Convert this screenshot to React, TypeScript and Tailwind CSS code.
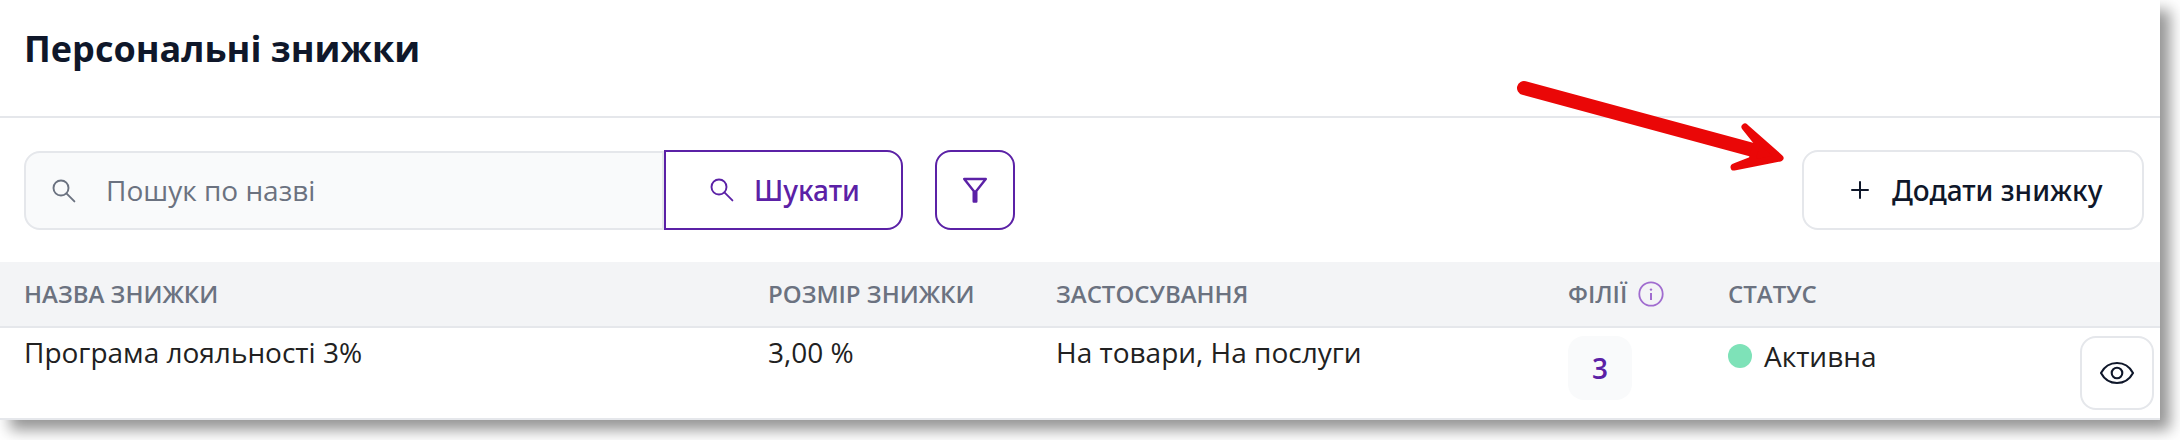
import type { ReactNode } from "react"

function SearchIcon() {
    return (
        <svg width="24" height="24" viewBox="0 0 24 24" fill="none" stroke="currentColor" strokeWidth="1.9" strokeLinecap="round">
            <circle cx="9" cy="9" r="7.5" />
            <path d="M14.4 14.4 22.4 22.4" />
        </svg>
    )
}

function FilterIcon() {
    return (
        <svg width="26" height="28" viewBox="0 0 26 28" fill="none" stroke="currentColor" strokeWidth="2.4" strokeLinejoin="round">
            <path d="M2.2 3H23.8L14.3 15V25.5H11.7V15Z" />
            <path d="M13 14.5V26" strokeWidth="4" />
        </svg>
    )
}

function PlusIcon() {
    return (
        <svg width="20" height="20" viewBox="0 0 20 20" fill="none" stroke="currentColor" strokeWidth="2" strokeLinecap="round">
            <path d="M10 2V18M2 10H18" />
        </svg>
    )
}

function InfoIcon() {
    return (
        <svg width="26" height="26" viewBox="0 0 26 26" fill="none" stroke="currentColor" strokeWidth="1.8">
            <circle cx="13" cy="13" r="11.7" />
            <path d="M13 12V19" strokeWidth="2" />
            <circle cx="13" cy="8.6" r="1.2" fill="currentColor" stroke="none" />
        </svg>
    )
}

function EyeIcon() {
    return (
        <svg width="36" height="26" viewBox="0 0 36 26" fill="none" stroke="currentColor" strokeWidth="2.1" strokeLinejoin="round">
            <path d="M2 13C9 -0.3 27 -0.3 34 13C27 26.3 9 26.3 2 13Z" />
            <circle cx="18" cy="13" r="5.3" />
        </svg>
    )
}

function HeadCell({ children }: { children?: ReactNode }) {
    return <div className="flex items-center gap-[11px]">{children}</div>
}

const columns = "grid grid-cols-[744px_288px_512px_160px_1fr_80px] pl-6"

export default function App() {
    return (
        <div className="h-[440px] w-[2180px] overflow-hidden bg-white font-['Open_Sans','Noto_Sans',sans-serif] text-[28px] leading-10">
            <div className="relative h-[420px] w-[2160px] bg-white shadow-[10px_10px_14px_rgba(0,0,0,0.42)]">
                <header className="flex h-[118px] items-start border-b-2 border-[#e5e7eb] px-6 pt-6">
                    <h1 className="text-[36px] leading-[50px] font-bold text-[#0f172a]">Персональні знижки</h1>
                </header>

                <div className="flex h-[144px] items-center px-4 pl-6">
                    <div className="mt-px flex h-[79px] w-[640px] items-center rounded-l-2xl border-2 border-[#e5e7eb] bg-[#f9fafb] pl-[26px] text-[#6b7280]">
                        <SearchIcon />
                        <span className="mb-px ml-[30px]">Пошук по назві</span>
                    </div>
                    <button className="flex h-20 w-[239px] items-center rounded-r-2xl border-2 border-[#5b21a6] pl-11 font-['Noto_Sans',sans-serif] font-medium text-[#5b21a6]">
                        <SearchIcon />
                        <span className="ml-5">Шукати</span>
                    </button>
                    <button className="ml-8 flex h-20 w-20 items-center justify-center rounded-2xl border-2 border-[#5b21a6] text-[#5b21a6]">
                        <FilterIcon />
                    </button>
                    <button className="ml-auto flex h-20 w-[342px] items-center rounded-2xl border-2 border-[#e5e7eb] pl-[46px] font-['Noto_Sans',sans-serif] font-medium text-[#0f172a]">
                        <PlusIcon />
                        <span className="ml-[22px]">Додати знижку</span>
                    </button>
                </div>

                <div className={`${columns} h-[66px] border-b-2 border-[#e5e7eb] bg-[#f3f4f6] text-2xl font-semibold text-[#6b7280]`}>
                    <HeadCell>НАЗВА ЗНИЖКИ</HeadCell>
                    <HeadCell>РОЗМІР ЗНИЖКИ</HeadCell>
                    <HeadCell>ЗАСТОСУВАННЯ</HeadCell>
                    <HeadCell>
                        ФІЛІЇ
                        <span className="text-[#a06ccf]">
                            <InfoIcon />
                        </span>
                    </HeadCell>
                    <HeadCell>СТАТУС</HeadCell>
                    <HeadCell />
                </div>

                <div className={`${columns} h-[92px] items-start border-b-2 border-[#e5e7eb] text-[#212121]`}>
                    <div className="pt-1">Програма лояльності 3%</div>
                    <div className="pt-1">3,00 %</div>
                    <div className="pt-1">На товари, На послуги</div>
                    <div className="mt-2 flex h-16 w-16 items-center justify-center rounded-2xl bg-[#f9fafb] font-semibold text-[#5b21a6]">3</div>
                    <div className="flex items-center gap-3 pt-2">
                        <span className="h-6 w-6 rounded-full bg-[#7ee2b8]" />
                        Активна
                    </div>
                    <button className="mt-2 flex h-[74px] w-[74px] items-center justify-center rounded-2xl border-2 border-[#e5e7eb] text-[#0f172a]">
                        <EyeIcon />
                    </button>
                </div>

                <svg className="absolute top-[70px] left-[1500px]" width="300" height="110" viewBox="0 0 300 110" fill="#ea0707" stroke="#ea0707" strokeLinejoin="round" strokeLinecap="round">
                    <path d="M24 18 253 80" strokeWidth="14" />
                    <path d="M245 57 280 88 234 97 252 90 257 72Z" strokeWidth="7" />
                </svg>
            </div>
        </div>
    )
}
